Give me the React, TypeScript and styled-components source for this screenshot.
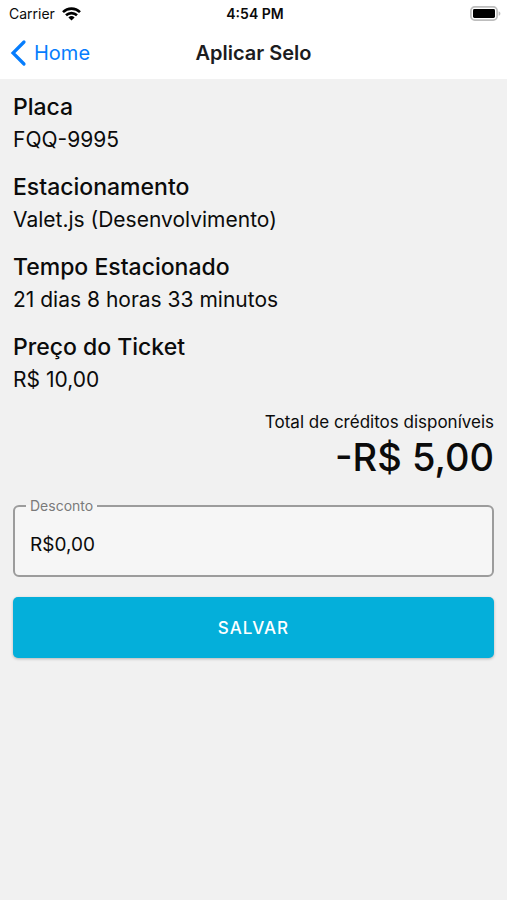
import React, { useState } from 'react';
import styled, { createGlobalStyle } from 'styled-components';

const Global = createGlobalStyle`
  * { box-sizing: border-box; }
  body { margin: 0; background: #f1f1f1; color: #0b0b0b; font-family: Inter, "Liberation Sans", sans-serif; }
`;

const Screen = styled.div`
  min-height: 100vh;
  background: #f1f1f1;
`;

const Top = styled.header`
  background: #fff;
`;

const StatusBar = styled.div`
  display: grid;
  grid-template-columns: 1fr auto 1fr;
  align-items: center;
  height: 27px;
  padding: 0 6px 0 9px;
  font-size: 14px;
`;

const Carrier = styled.span`
  display: flex;
  align-items: center;
  gap: 7px;
`;

const Clock = styled.span`
  font-weight: 600;
`;

const Battery = styled.svg`
  justify-self: end;
`;

const NavBar = styled.nav`
  display: grid;
  grid-template-columns: 1fr auto 1fr;
  align-items: center;
  height: 52px;
  padding: 0 10px;
`;

const Back = styled.a`
  display: flex;
  align-items: center;
  gap: 7px;
  color: #067dfd;
  font-size: 20px;
  text-decoration: none;
`;

const Title = styled.h1`
  margin: 0;
  color: #1c1c1e;
  font-size: 20px;
  font-weight: 600;
`;

const Content = styled.main`
  padding: 12px 13px;
`;

const Details = styled.dl`
  display: grid;
  gap: 14px;
  margin: 0;
`;

const Term = styled.dt`
  font-size: 23px;
  line-height: 32px;
  font-weight: 500;
`;

const Value = styled.dd`
  margin: 0;
  font-size: 21px;
  line-height: 34px;
`;

const Credits = styled.section`
  margin-top: 14px;
  text-align: right;
`;

const CreditsLabel = styled.div`
  font-size: 17px;
  line-height: 22px;
`;

const CreditsValue = styled.div`
  font-size: 38px;
  line-height: 48px;
  font-weight: 500;
`;

const Field = styled.fieldset`
  margin: 17px 0 20px;
  padding: 0 15px;
  border: 2px solid #9c9c9c;
  border-radius: 6px;
  background: #f6f6f6;
`;

const FieldLabel = styled.legend`
  margin-left: -4px;
  padding: 0 4px;
  color: #7a7a7a;
  font-size: 14px;
  line-height: 16px;
`;

const FieldInput = styled.input`
  display: block;
  width: 100%;
  height: 61px;
  padding: 0;
  border: 0;
  outline: 0;
  background: transparent;
  color: #0b0b0b;
  font: inherit;
  font-size: 19px;
`;

const SaveButton = styled.button`
  display: block;
  width: 100%;
  height: 61px;
  border: 0;
  border-radius: 5px;
  background: #04afda;
  box-shadow: 0 1px 3px rgba(0, 0, 0, 0.25);
  color: #fff;
  font: inherit;
  font-size: 17px;
  font-weight: 500;
  letter-spacing: 1px;
  text-transform: uppercase;
`;

const details = [
  ['Placa', 'FQQ-9995'],
  ['Estacionamento', 'Valet.js (Desenvolvimento)'],
  ['Tempo Estacionado', '21 dias 8 horas 33 minutos'],
  ['Preço do Ticket', 'R$ 10,00'],
];

export default function App() {
  const [discount, setDiscount] = useState('R$0,00');
  return (
    <Screen>
      <Global />
      <Top>
        <StatusBar>
          <Carrier>
            Carrier
            <svg width="19" height="14" viewBox="0 0 19 14" aria-hidden="true">
              <g fill="none" stroke="#000" strokeWidth="2.6">
                <path d="M1 5.1a12.2 12.2 0 0 1 17 0" />
                <path d="M4 8.3a8 8 0 0 1 11 0" />
              </g>
              <path d="M6.4 10.5a4.5 4.5 0 0 1 6.2 0L9.5 13.6z" />
            </svg>
          </Carrier>
          <Clock>4:54 PM</Clock>
          <Battery width="31" height="15" viewBox="0 0 31 15" aria-hidden="true">
            <rect x="0.9" y="0.9" width="26.2" height="13.2" rx="3.8" fill="none" stroke="#bdbdbd" strokeWidth="1.7" />
            <rect x="3" y="3" width="22" height="9" rx="1.4" />
            <path d="M28.6 5.2c2.4.8 2.4 3.8 0 4.6z" fill="#bdbdbd" />
          </Battery>
        </StatusBar>
        <NavBar>
          <Back href="#home">
            <svg width="17" height="28" viewBox="0 0 17 28" aria-hidden="true">
              <path d="M14 3 3 14l11 11" fill="none" stroke="#067dfd" strokeWidth="3.2" strokeLinecap="round" />
            </svg>
            Home
          </Back>
          <Title>Aplicar Selo</Title>
        </NavBar>
      </Top>
      <Content>
        <Details>
          {details.map(([term, value]) => (
            <div key={term}>
              <Term>{term}</Term>
              <Value>{value}</Value>
            </div>
          ))}
        </Details>
        <Credits>
          <CreditsLabel>Total de créditos disponíveis</CreditsLabel>
          <CreditsValue>-R$ 5,00</CreditsValue>
        </Credits>
        <Field>
          <FieldLabel>
            <label htmlFor="discount">Desconto</label>
          </FieldLabel>
          <FieldInput id="discount" value={discount} onChange={(e) => setDiscount(e.target.value)} />
        </Field>
        <SaveButton type="button">Salvar</SaveButton>
      </Content>
    </Screen>
  );
}
